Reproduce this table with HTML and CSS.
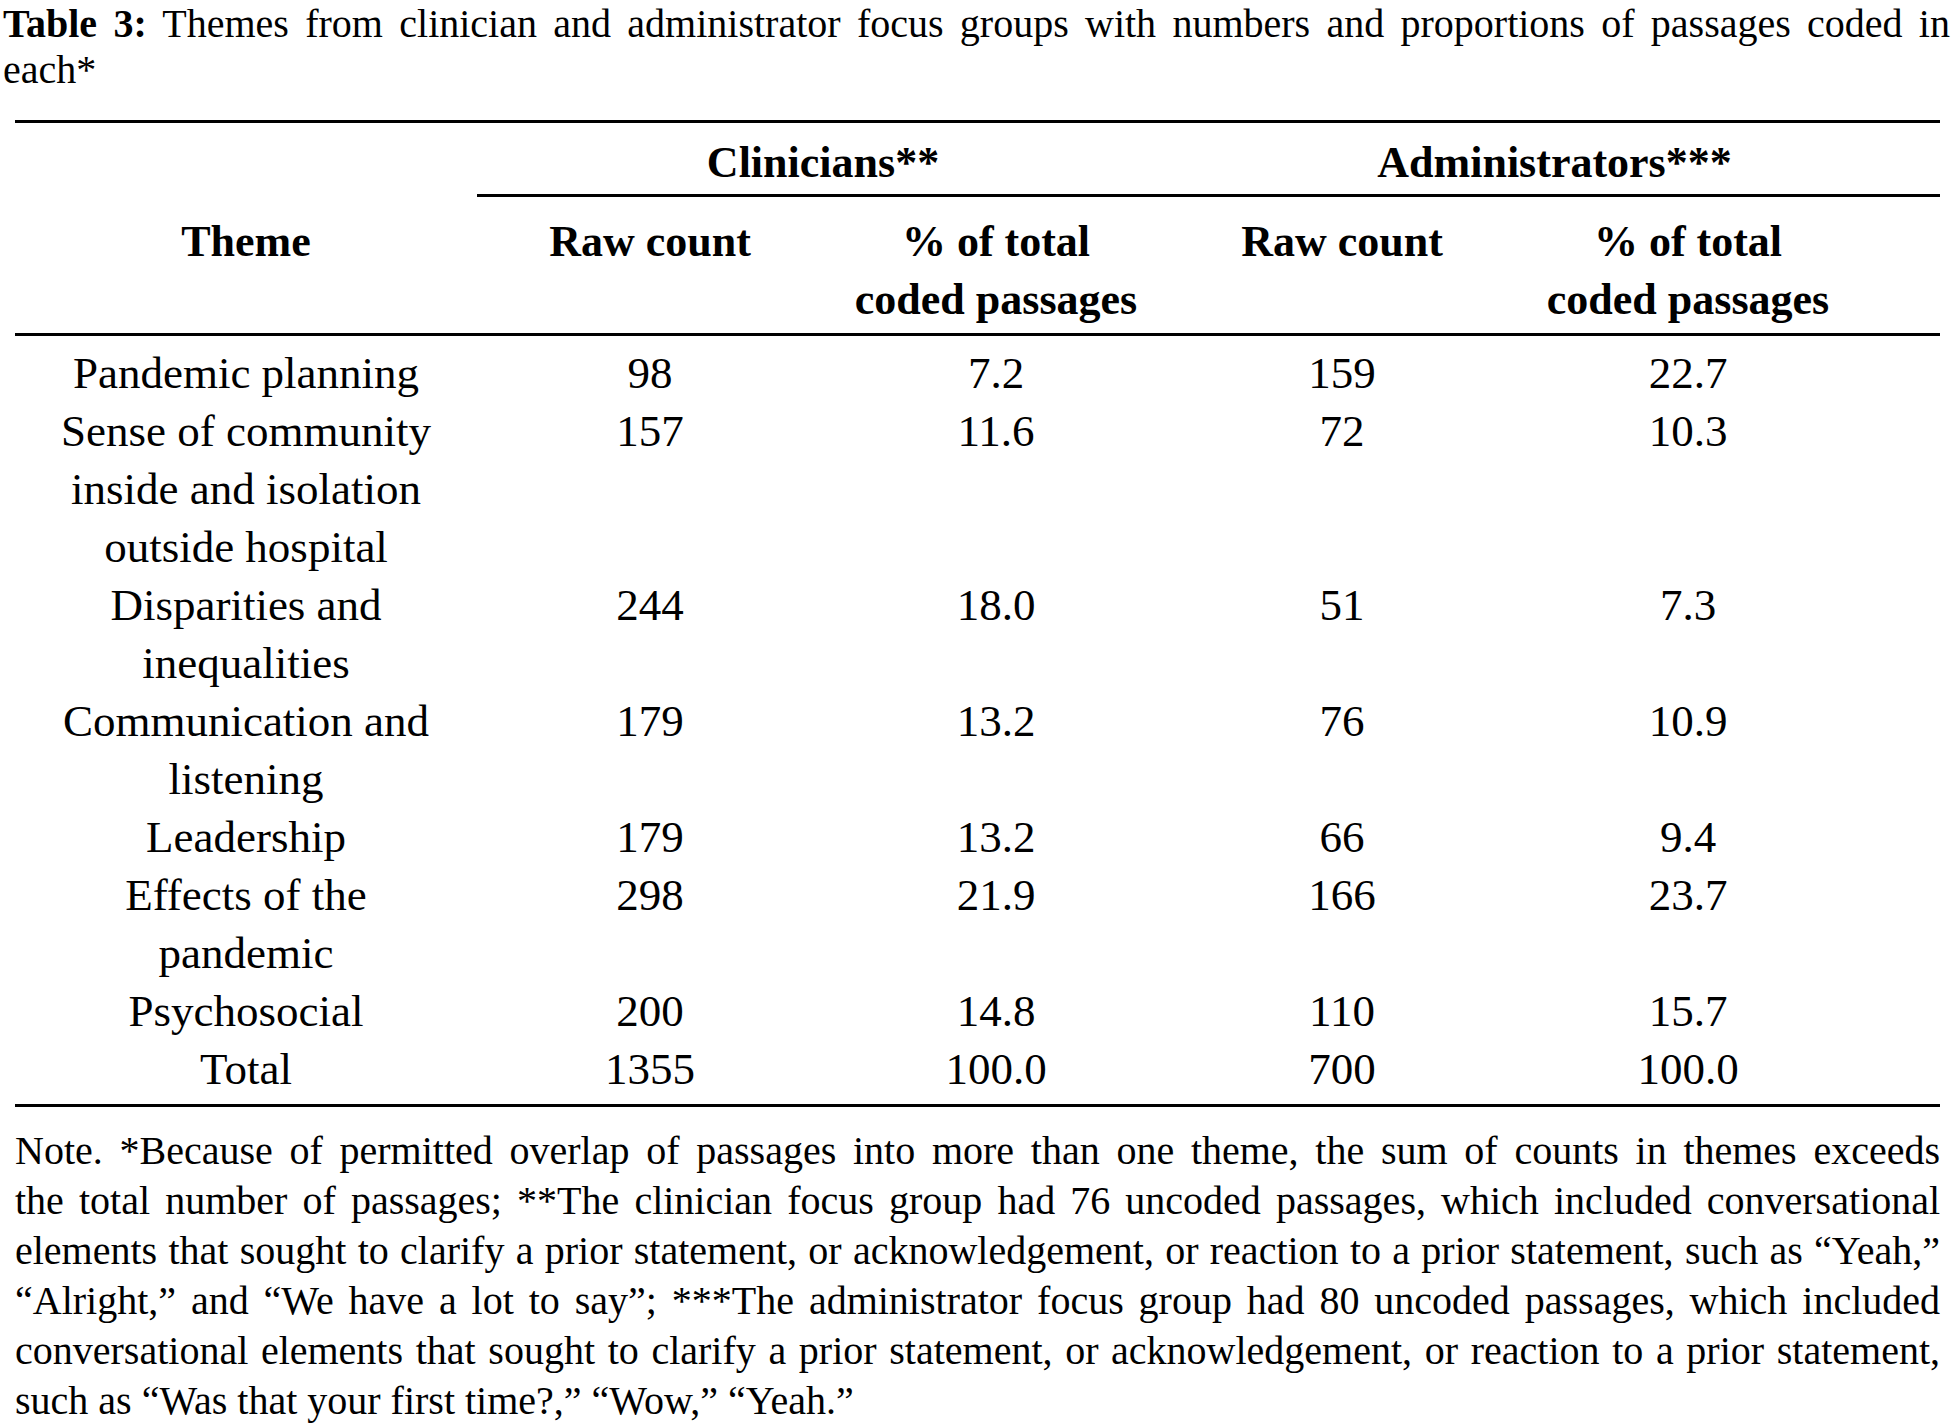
FILE: index.html
```html
<!DOCTYPE html>
<html lang="en">
<head>
<meta charset="utf-8">
<title>Table 3</title>
<link rel="stylesheet" href="styles.css">
</head>
<body>
<div class="page">
  <p class="caption">
    <span class="line"><b>Table 3:</b> Themes from clinician and administrator focus groups with numbers and proportions of passages coded in</span>
    <span class="line last">each*</span>
  </p>
  <table class="data">
    <colgroup>
      <col class="c-theme">
      <col class="c-num">
      <col class="c-num">
      <col class="c-num">
      <col class="c-last">
    </colgroup>
    <thead>
      <tr class="group">
        <th class="blank"></th>
        <th class="grp" colspan="2">Clinicians**</th>
        <th class="grp" colspan="2">Administrators***</th>
      </tr>
      <tr class="sub">
        <th>Theme</th>
        <th>Raw count</th>
        <th>% of total<br>coded passages</th>
        <th>Raw count</th>
        <th class="pad-last">% of total<br>coded passages</th>
      </tr>
    </thead>
    <tbody>
      <tr class="first"><td>Pandemic planning</td><td>98</td><td>7.2</td><td>159</td><td class="pad-last">22.7</td></tr>
      <tr><td>Sense of community<br>inside and isolation<br>outside hospital</td><td>157</td><td>11.6</td><td>72</td><td class="pad-last">10.3</td></tr>
      <tr><td>Disparities and<br>inequalities</td><td>244</td><td>18.0</td><td>51</td><td class="pad-last">7.3</td></tr>
      <tr><td>Communication and<br>listening</td><td>179</td><td>13.2</td><td>76</td><td class="pad-last">10.9</td></tr>
      <tr><td>Leadership</td><td>179</td><td>13.2</td><td>66</td><td class="pad-last">9.4</td></tr>
      <tr><td>Effects of the<br>pandemic</td><td>298</td><td>21.9</td><td>166</td><td class="pad-last">23.7</td></tr>
      <tr><td>Psychosocial</td><td>200</td><td>14.8</td><td>110</td><td class="pad-last">15.7</td></tr>
      <tr class="final"><td>Total</td><td>1355</td><td>100.0</td><td>700</td><td class="pad-last">100.0</td></tr>
    </tbody>
  </table>
  <p class="note">
    <span class="line">Note. *Because of permitted overlap of passages into more than one theme, the sum of counts in themes exceeds</span>
    <span class="line">the total number of passages; **The clinician focus group had 76 uncoded passages, which included conversational</span>
    <span class="line">elements that sought to clarify a prior statement, or acknowledgement, or reaction to a prior statement, such as “Yeah,”</span>
    <span class="line">“Alright,” and “We have a lot to say”; ***The administrator focus group had 80 uncoded passages, which included</span>
    <span class="line">conversational elements that sought to clarify a prior statement, or acknowledgement, or reaction to a prior statement,</span>
    <span class="line last">such as “Was that your first time?,” “Wow,” “Yeah.”</span>
  </p>
</div>
</body>
</html>
```

FILE: styles.css
```css
html, body {
  margin: 0;
  padding: 0;
  background: #ffffff;
}

body {
  font-family: "Liberation Serif", "Times New Roman", serif;
  color: #000000;
}

.page {
  width: 1955px;
  padding-top: 1px;
}

.caption {
  margin: 0 5px 27px 3px;
  font-size: 40px;
  line-height: 46px;
}

.caption b {
  font-weight: 700;
}

.line {
  display: block;
  text-align: justify;
  text-align-last: justify;
}

.line.last {
  text-align-last: left;
}

.data {
  margin: 0 0 0 15px;
  width: 1925px;
  table-layout: fixed;
  border-collapse: separate;
  border-spacing: 0;
  border-top: 3px solid #000;
  border-bottom: 3px solid #000;
}

.c-theme { width: 462px; }
.c-num { width: 346px; }
.c-last { width: 425px; }

.data th,
.data td {
  padding: 0;
  text-align: center;
  vertical-align: top;
}

.data th {
  font-size: 44px;
  line-height: 58px;
  font-weight: 700;
}

.group th {
  padding-top: 11px;
  padding-bottom: 2px;
}

.group th.grp {
  border-bottom: 3px solid #000;
}

.sub th {
  padding-top: 16px;
  padding-bottom: 4px;
  border-bottom: 3px solid #000;
}

.data td {
  font-size: 45px;
  line-height: 58px;
}

.data .pad-last {
  padding-right: 79px;
}

.data tr.first td {
  padding-top: 8px;
}

.data tr.final td {
  padding-bottom: 6px;
}

.note {
  margin: 19px 15px 0 15px;
  font-size: 40px;
  line-height: 50px;
}
```
